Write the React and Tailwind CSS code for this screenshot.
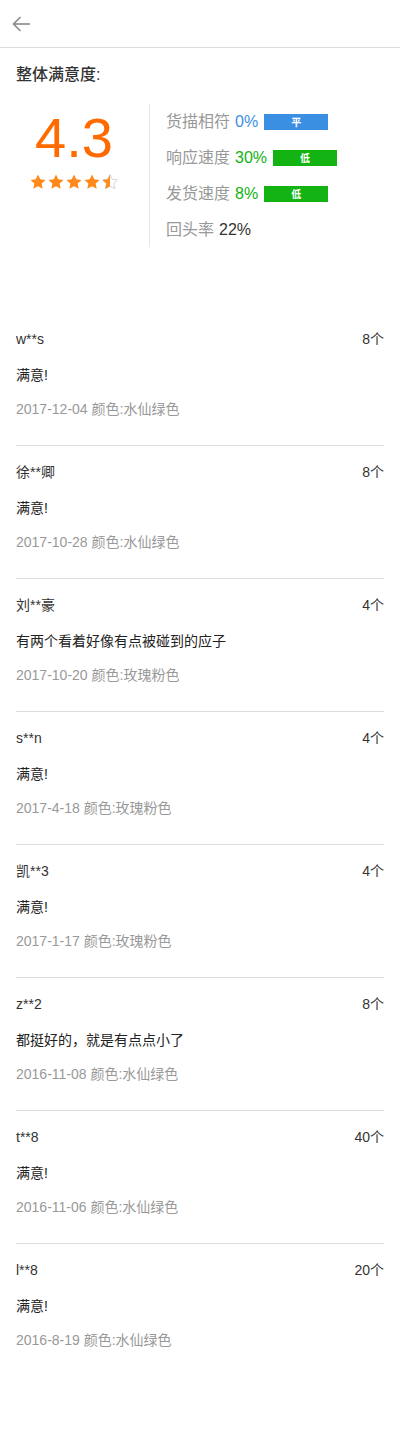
import React from "react";

const FONT = { fontFamily: '"Liberation Sans", Arial, "Noto Sans CJK SC", sans-serif' };

const reviews = [
  { name: "w**s", count: "8个", text: "满意!", date: "2017-12-04 颜色:水仙绿色" },
  { name: "徐**卿", count: "8个", text: "满意!", date: "2017-10-28 颜色:水仙绿色" },
  { name: "刘**豪", count: "4个", text: "有两个看着好像有点被碰到的应子", date: "2017-10-20 颜色:玫瑰粉色" },
  { name: "s**n", count: "4个", text: "满意!", date: "2017-4-18 颜色:玫瑰粉色" },
  { name: "凯**3", count: "4个", text: "满意!", date: "2017-1-17 颜色:玫瑰粉色" },
  { name: "z**2", count: "8个", text: "都挺好的，就是有点点小了", date: "2016-11-08 颜色:水仙绿色" },
  { name: "t**8", count: "40个", text: "满意!", date: "2016-11-06 颜色:水仙绿色" },
  { name: "l**8", count: "20个", text: "满意!", date: "2016-8-19 颜色:水仙绿色" },
];

const STAR = "M12 0.8l3.4 7.1 7.8 1-5.7 5.4 1.5 7.7L12 18.2l-7 3.8 1.5-7.7-5.7-5.4 7.8-1z";

function Star({ half }) {
  return (
    <svg width="16" height="16" viewBox="0 0 24 24">
      <defs>
        <clipPath id="halfclip">
          <rect x="0" y="0" width="12" height="24" />
        </clipPath>
      </defs>
      {half ? (
        <>
          <path d={STAR} fill="none" stroke="#cccccc" strokeWidth="1.2" />
          <path d={STAR} fill="#ff8a1c" clipPath="url(#halfclip)" />
        </>
      ) : (
        <path d={STAR} fill="#ff8a1c" />
      )}
    </svg>
  );
}

function Metric({ label, value, color, bar, barColor }) {
  return (
    <div className="flex h-9 items-center text-[16px]">
      <span className="text-[#999999]">{label}</span>
      <span className="ml-[5px]" style={{ color }}>{value}</span>
      {bar && (
        <span
          className="ml-[6px] flex h-4 w-16 items-center justify-center text-[10px] font-bold text-white"
          style={{ background: barColor }}
        >
          {bar}
        </span>
      )}
    </div>
  );
}

export default function App() {
  return (
    <div className="min-h-[1443px] w-[400px] bg-white text-[#333333]" style={FONT}>
      <div className="flex h-12 items-center border-b border-[#dddddd] pl-3">
        <svg width="19" height="16" viewBox="0 0 19 16" fill="none" stroke="#8a8a8a" strokeWidth="1.6">
          <path d="M18 8H1.5" />
          <path d="M8.5 1L1.5 8l7 7" />
        </svg>
      </div>

      <div className="px-4 pt-[17px]">
        <div className="h-5 text-[16px] font-medium leading-5 text-[#333333]">整体满意度:</div>
        <div className="mt-[19px] flex">
          <div className="flex w-[133px] flex-col items-center pr-[17px] pt-[6px]">
            <div className="text-[56px] leading-[56px] text-[#ff6a00]">4.3</div>
            <div className="mt-[8px] flex gap-[2px]">
              <Star />
              <Star />
              <Star />
              <Star />
              <Star half />
            </div>
          </div>
          <div className="h-[143px] w-px bg-[#e8e8e8]" />
          <div className="flex flex-col pl-4">
            <Metric label="货描相符" value="0%" color="#3b8fe2" bar="平" barColor="#3b8fe2" />
            <Metric label="响应速度" value="30%" color="#12b312" bar="低" barColor="#12b312" />
            <Metric label="发货速度" value="8%" color="#12b312" bar="低" barColor="#12b312" />
            <Metric label="回头率" value="22%" color="#333333" />
          </div>
        </div>
      </div>

      <div className="mt-[65px] px-4">
        {reviews.map((r, i) => (
          <div
            key={i}
            className={`pt-4 pb-[26px] ${i < reviews.length - 1 ? "border-b border-[#dddddd]" : ""}`}
          >
            <div className="flex h-5 items-center justify-between text-[14px] text-[#333333]">
              <span>{r.name}</span>
              <span>{r.count}</span>
            </div>
            <div className="mt-4 flex h-5 items-center text-[14px] text-[#222222]">{r.text}</div>
            <div className="mt-[14px] flex h-5 items-center text-[14px] text-[#999999]">{r.date}</div>
          </div>
        ))}
      </div>
    </div>
  );
}
